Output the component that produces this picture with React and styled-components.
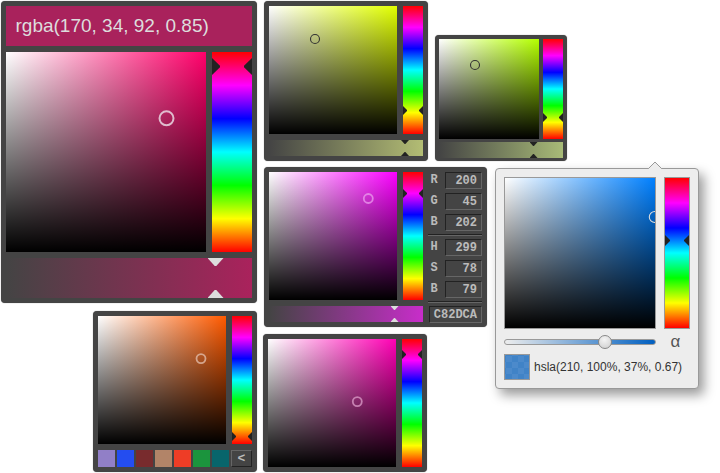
import React from "react";
import styled, { createGlobalStyle, css } from "styled-components";

const Global = createGlobalStyle`
  * { box-sizing: border-box; }
  html, body { margin: 0; background: #fff; }
  body { width: 720px; height: 473px; overflow: hidden; font-family: "Liberation Sans", Arial, sans-serif; }
`;

const Page = styled.main`
  display: flex;
  align-items: flex-start;
  gap: 6px;
  width: 720px;
  height: 473px;
  padding: 1px 0 0 1px;
  overflow: hidden;
`;

const LeftColumn = styled.div`
  display: flex;
  flex-direction: column;
  align-items: flex-end;
  gap: 8px;
  flex: none;
  width: 256px;
`;

const RightArea = styled.div`
  display: flex;
  flex-direction: column;
  gap: 6px;
`;

const TopRow = styled.div`
  display: flex;
  align-items: flex-end;
  gap: 7px;
  padding-left: 1px;
`;

const LowerRow = styled.div`
  display: flex;
  align-items: flex-start;
  gap: 8px;
`;

const Stack = styled.div`
  display: flex;
  flex-direction: column;
  align-items: flex-start;
  gap: ${(p) => p.$gap}px;
`;

const BarStack = styled.div`
  display: flex;
  flex-direction: column;
  gap: 6px;
`;

const Indent = styled.div`
  padding-left: 1px;
`;

const Panel = styled.section`
  display: flex;
  flex-direction: column;
  gap: ${(p) => p.$gap ?? 6}px;
  padding: ${(p) => p.$padding ?? "5px"};
  width: max-content;
  background: #444;
  border-radius: 4px;
  box-shadow: 0 0 1px 0 #777;
`;

const Row = styled.div`
  display: flex;
  gap: ${(p) => p.$gap ?? 6}px;
`;

const ColorHeader = styled.header`
  height: 40px;
  padding-left: 9.5px;
  background: #a9225c;
  color: #ddd;
  font-size: 19px;
  line-height: 40px;
  white-space: nowrap;
`;

const Field = styled.div`
  position: relative;
  flex: none;
  overflow: hidden;
  width: ${(p) => p.$size}px;
  height: ${(p) => p.$size}px;
  background:
    linear-gradient(to top, #000, transparent),
    linear-gradient(to right, #fff, ${(p) => p.$color});
  ${(p) => p.$outlined && css`
    border: 1px solid #999;
    background-clip: padding-box;
    background-origin: padding-box;
  `}
`;

const Ring = styled.svg`
  position: absolute;
  inset: 0;
  width: 100%;
  height: 100%;
`;

const HueBar = styled.div`
  position: relative;
  flex: none;
  width: ${(p) => p.$width}px;
  background: linear-gradient(#f00, #f0f 16.67%, #00f 33.33%, #0ff 50%, #0f0 66.67%, #ff0 83.33%, #f00);
  ${(p) => p.$outlined && css`
    border: 1px solid #999;
    background-origin: padding-box;
  `}
`;

const HueMarks = styled.span`
  position: absolute;
  left: 0;
  right: 0;
  top: ${(p) => p.$y - p.$s - 0.5}px;
  height: ${(p) => p.$s * 2 + 1}px;
  &::before, &::after {
    content: "";
    position: absolute;
    top: 0;
    width: ${(p) => p.$s}px;
    height: 100%;
    background: #222;
  }
  &::before { left: 0; clip-path: polygon(0 0, 100% 45%, 100% 55%, 0 100%); }
  &::after { right: 0; clip-path: polygon(100% 0, 0 45%, 0 55%, 100% 100%); }
`;

const AlphaBar = styled.div`
  position: relative;
  height: ${(p) => p.$height ?? 16}px;
  background: linear-gradient(to right, #444, ${(p) => p.$color});
`;

const AlphaMarks = styled.span`
  position: absolute;
  top: 0;
  bottom: 0;
  left: ${(p) => p.$x - p.$s}px;
  width: ${(p) => p.$s * 2}px;
  &::before, &::after {
    content: "";
    position: absolute;
    left: 0;
    width: 100%;
    height: ${(p) => p.$s}px;
    background: ${(p) => p.$color};
  }
  &::before { top: 0; clip-path: polygon(0 0, 100% 0, 55% 100%, 45% 100%); }
  &::after { bottom: 0; clip-path: polygon(0 100%, 45% 0, 55% 0, 100% 100%); }
`;

const Values = styled.div`
  display: flex;
  flex-direction: column;
  width: 53px;
  margin-bottom: -1px;
  color: #bbb;
  font: bold 12px/17px "Liberation Mono", "Courier New", monospace;
`;

const ValueGroup = styled.div`
  display: flex;
  flex-direction: column;
  gap: 4px;
`;

const ValueRow = styled.label`
  display: flex;
  justify-content: space-between;
  padding-left: 1.5px;
`;

const ValueBox = styled.output`
  display: block;
  width: ${(p) => p.$width}px;
  height: 17px;
  padding-right: 4px;
  border: 1px solid;
  border-color: #222 #666 #666 #222;
  line-height: 16px;
  text-align: right;
`;

const Divider = styled.hr`
  width: 54px;
  height: 2px;
  margin: 3px 0 3px -1px;
  border: 0;
  border-top: 1px solid #222;
  border-bottom: 1px solid #666;
`;

const Memory = styled.div`
  display: flex;
  gap: 2px;
  height: 17px;
`;

const Swatch = styled.span`
  width: 17px;
  height: 17px;
  background: ${(p) => p.$color};
`;

const StoreButton = styled.button`
  width: 21px;
  height: 17px;
  padding: 0;
  border: 1px solid;
  border-color: #666 #222 #222 #666;
  background: #444;
  color: #bbb;
  font: bold 13px/14px "Liberation Mono", monospace;
`;

const Popover = styled.section`
  position: relative;
  display: flex;
  flex-direction: column;
  width: 204px;
  height: 221px;
  margin-top: 1px;
  padding: 8px;
  background: #ededed;
  border: 1px solid #999;
  border-radius: 4px;
  box-shadow: 5px 6px 12px rgba(0, 0, 0, 0.4);
`;

const Notch = styled.svg`
  position: absolute;
  left: 151px;
  top: -8px;
`;

const SliderRow = styled.div`
  display: flex;
  align-items: center;
  gap: 8px;
  height: 26px;
`;

const Track = styled.div`
  position: relative;
  width: 152px;
  height: 6px;
  border: 1px solid #999;
  border-radius: 3px;
  background: linear-gradient(to right, #ededed, #005fc0);
`;

const Knob = styled.span`
  position: absolute;
  left: 93px;
  top: -5px;
  width: 14px;
  height: 14px;
  border: 1px solid #888;
  border-radius: 50%;
  background: radial-gradient(circle at 45% 30%, #f4f4f4, #ccc);
`;

const AlphaLabel = styled.span`
  width: 23px;
  color: #555;
  font-size: 17px;
  line-height: 20px;
  text-align: center;
`;

const ResultRow = styled.div`
  display: flex;
  align-items: center;
  gap: 4px;
  margin-top: -1px;
`;

const CheckSwatch = styled.span`
  width: 26px;
  height: 26px;
  border: 1px solid #999;
  background: conic-gradient(#4083c7 25%, #4c8acb 0 50%, #4083c7 0 75%, #4c8acb 0) 1px 1px / 12px 12px;
`;

const ResultText = styled.span`
  color: #333;
  font-size: 12px;
  line-height: 14px;
  white-space: nowrap;
`;

function Picker({ size, color, ring, hueY, hueWidth = 20, mark = 4, gap, outlined }) {
  return (
    <Row $gap={gap}>
      <Field $size={size} $color={color} $outlined={outlined}>
        <Ring>
          <circle cx={ring.x} cy={ring.y} r={ring.r ?? 4.5} fill="none"
            stroke={ring.color} strokeWidth={ring.stroke ?? 1.1} />
        </Ring>
      </Field>
      <HueBar $width={hueWidth} $outlined={outlined}>
        <HueMarks $y={hueY} $s={mark} />
      </HueBar>
    </Row>
  );
}

const rgb = [["R", 200], ["G", 45], ["B", 202]];
const hsb = [["H", 299], ["S", 78], ["B", 79]];
const saved = ["#917fc7", "#244df0", "#782b2d", "#b28468", "#ee3d26", "#1b943d", "#08656b"];

function Channels({ items }) {
  return (
    <ValueGroup>
      {items.map(([name, value]) => (
        <ValueRow key={name}>
          {name}
          <ValueBox $width={37}>{value}</ValueBox>
        </ValueRow>
      ))}
    </ValueGroup>
  );
}

export default function App() {
  return (
    <>
      <Global />
      <Page>
        <LeftColumn>
          <Panel>
            <ColorHeader>rgba(170, 34, 92, 0.85)</ColorHeader>
            <Picker size={200} color="#ff006a" hueWidth={40} hueY={14.5} mark={8}
              ring={{ x: 160.5, y: 66.3, r: 7, stroke: 2, color: "rgba(230,205,218,.9)" }} />
            <AlphaBar $height={40} $color="#aa225c">
              <AlphaMarks $x={209.5} $s={8} $color="#ddd" />
            </AlphaBar>
          </Panel>
          <Panel>
            <Picker size={128} color="#ff5a00" hueY={120.5}
              ring={{ x: 103, y: 42.6, stroke: 1.8, color: "rgba(221,180,160,.85)" }} />
            <Memory>
              {saved.map((c) => <Swatch key={c} $color={c} />)}
              <StoreButton>&lt;</StoreButton>
            </Memory>
          </Panel>
        </LeftColumn>

        <RightArea>
          <TopRow>
            <Panel>
              <Picker size={128} color="#e1ff00" hueY={104.5} ring={{ x: 46, y: 33, color: "#333" }} />
              <AlphaBar $color="#b3bd74">
                <AlphaMarks $x={136} $s={4} $color="#222" />
              </AlphaBar>
            </Panel>
            <Panel $gap={3} $padding="4px 4px 3px">
              <Picker size={100} color="#b4ff00" gap={4} hueY={78.5} ring={{ x: 36, y: 26, color: "#333" }} />
              <AlphaBar $color="#a8bb77">
                <AlphaMarks $x={94.5} $s={4} $color="#222" />
              </AlphaBar>
            </Panel>
          </TopRow>

          <LowerRow>
            <Stack $gap={7}>
              <Indent>
                <Panel>
                  <Row>
                    <BarStack>
                      <Picker size={128} color="#fb00ff" hueY={21.5}
                        ring={{ x: 99.3, y: 26.5, stroke: 1.8, color: "rgba(232,150,235,.8)" }} />
                      <AlphaBar $color="#c82dca">
                        <AlphaMarks $x={125.5} $s={4} $color="#ddd" />
                      </AlphaBar>
                    </BarStack>
                    <Values>
                      <Channels items={rgb} />
                      <Divider />
                      <Channels items={hsb} />
                      <Divider />
                      <ValueBox $width={53}>C82DCA</ValueBox>
                    </Values>
                  </Row>
                </Panel>
              </Indent>
              <Panel>
                <Picker size={128} color="#ff00b4" hueY={15.5}
                  ring={{ x: 89.3, y: 62.6, stroke: 1.8, color: "rgba(210,145,190,.85)" }} />
              </Panel>
            </Stack>

            <Popover>
              <Notch width="16" height="9" viewBox="0 0 16 9">
                <path d="M0.5 9 L1 8 L8 1 L15 8 L15.5 9 Z" fill="#ededed" />
                <path d="M0.5 7.5 L1.5 7.5 L8 1 L14.5 7.5 L15.5 7.5" fill="none" stroke="#999" />
              </Notch>
              <Picker size={152} color="#0080ff" gap={8} hueWidth={26} hueY={62.5} mark={5} outlined
                ring={{ x: 149.8, y: 39, r: 5.5, color: "#ddd" }} />
              <SliderRow>
                <Track><Knob /></Track>
                <AlphaLabel>α</AlphaLabel>
              </SliderRow>
              <ResultRow>
                <CheckSwatch />
                <ResultText>hsla(210, 100%, 37%, 0.67)</ResultText>
              </ResultRow>
            </Popover>
          </LowerRow>
        </RightArea>
      </Page>
    </>
  );
}
